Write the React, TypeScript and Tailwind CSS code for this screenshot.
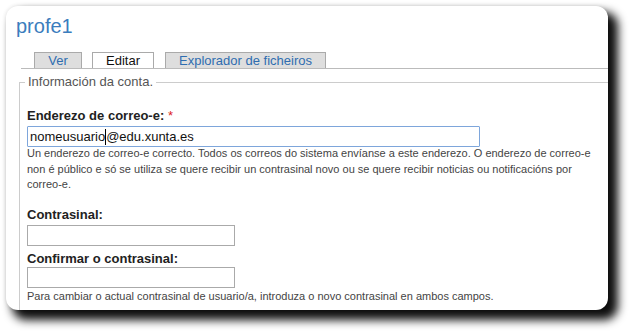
import React from "react";

export default function App() {
  return (
    <div className="w-[632px] h-[334px] bg-white overflow-hidden pt-[6px] pl-[6px]" style={{ fontFamily: '"Liberation Sans", Arial, sans-serif' }}>
      <div className="w-[602px] h-[304px] bg-white rounded-[12px] overflow-hidden flex flex-col pl-[10px] pt-[8px] shadow-[8px_8px_10px_2px_rgba(0,0,0,0.95),0_0_4px_rgba(0,0,0,0.12)]">
        <h1 className="text-[20px] leading-[24px] text-[#3b7dbd] font-normal">profe1</h1>
        <div className="mt-[14px] ml-[5px] flex border-b border-[#bbbbbb] pl-[13px]">
          <div className="w-[48px] h-[16px] border border-b-0 border-[#aaaaaa] bg-[#dedede] text-center text-[13px] leading-[15px] text-[#2f6db0]">Ver</div>
          <div className="ml-[10px] w-[62px] h-[16px] border border-b-0 border-[#aaaaaa] bg-white text-center text-[13px] leading-[15px] text-[#111]">Editar</div>
          <div className="ml-[11px] w-[161px] h-[16px] border border-b-0 border-[#aaaaaa] bg-[#dedede] text-center text-[13px] leading-[15px] text-[#2f6db0]">Explorador de ficheiros</div>
        </div>
        <fieldset className="mt-[5px] ml-[3px] flex-1 border border-r-0 border-b-0 border-[#cccccc]">
          <legend className="ml-[5px] px-[3px] text-[13px] leading-[16px] text-[#555555]">Información da conta.</legend>
          <div className="pl-[7px]">
            <div className="mt-[18px] text-[13px] leading-[16px] font-bold text-[#222222]">
              Enderezo de correo-e: <span className="text-[#dd2222] font-normal">*</span>
            </div>
            <div className="mt-[2px] w-[453px] h-[21px] border border-[#7ea6db] rounded-[1px] pl-[2px] flex items-center text-[13px] text-[#111]">
              <span>nomeusuario</span>
              <span className="inline-block w-[1px] h-[16px] bg-black"></span>
              <span>@edu.xunta.es</span>
            </div>
            <p className="mt-[-1px] w-[580px] text-[11px] leading-[15.6px] text-[#444444]">
              Un enderezo de correo-e correcto. Todos os correos do sistema envíanse a este enderezo. O enderezo de correo-e non é público e só se utiliza se quere recibir un contrasinal novo ou se quere recibir noticias ou notificacións por correo-e.
            </p>
            <div className="mt-[14px] text-[13px] leading-[16px] font-bold text-[#222222]">Contrasinal:</div>
            <div className="mt-[2px] w-[208px] h-[21px] border border-[#aaaaaa]"></div>
            <div className="mt-[5px] text-[13px] leading-[16px] font-bold text-[#222222]">Confirmar o contrasinal:</div>
            <div className="mt-0 w-[208px] h-[21px] border border-[#aaaaaa]"></div>
            <p className="mt-[1px] text-[11px] leading-[15px] text-[#444444]">
              Para cambiar o actual contrasinal de usuario/a, introduza o novo contrasinal en ambos campos.
            </p>
          </div>
        </fieldset>
      </div>
    </div>
  );
}
